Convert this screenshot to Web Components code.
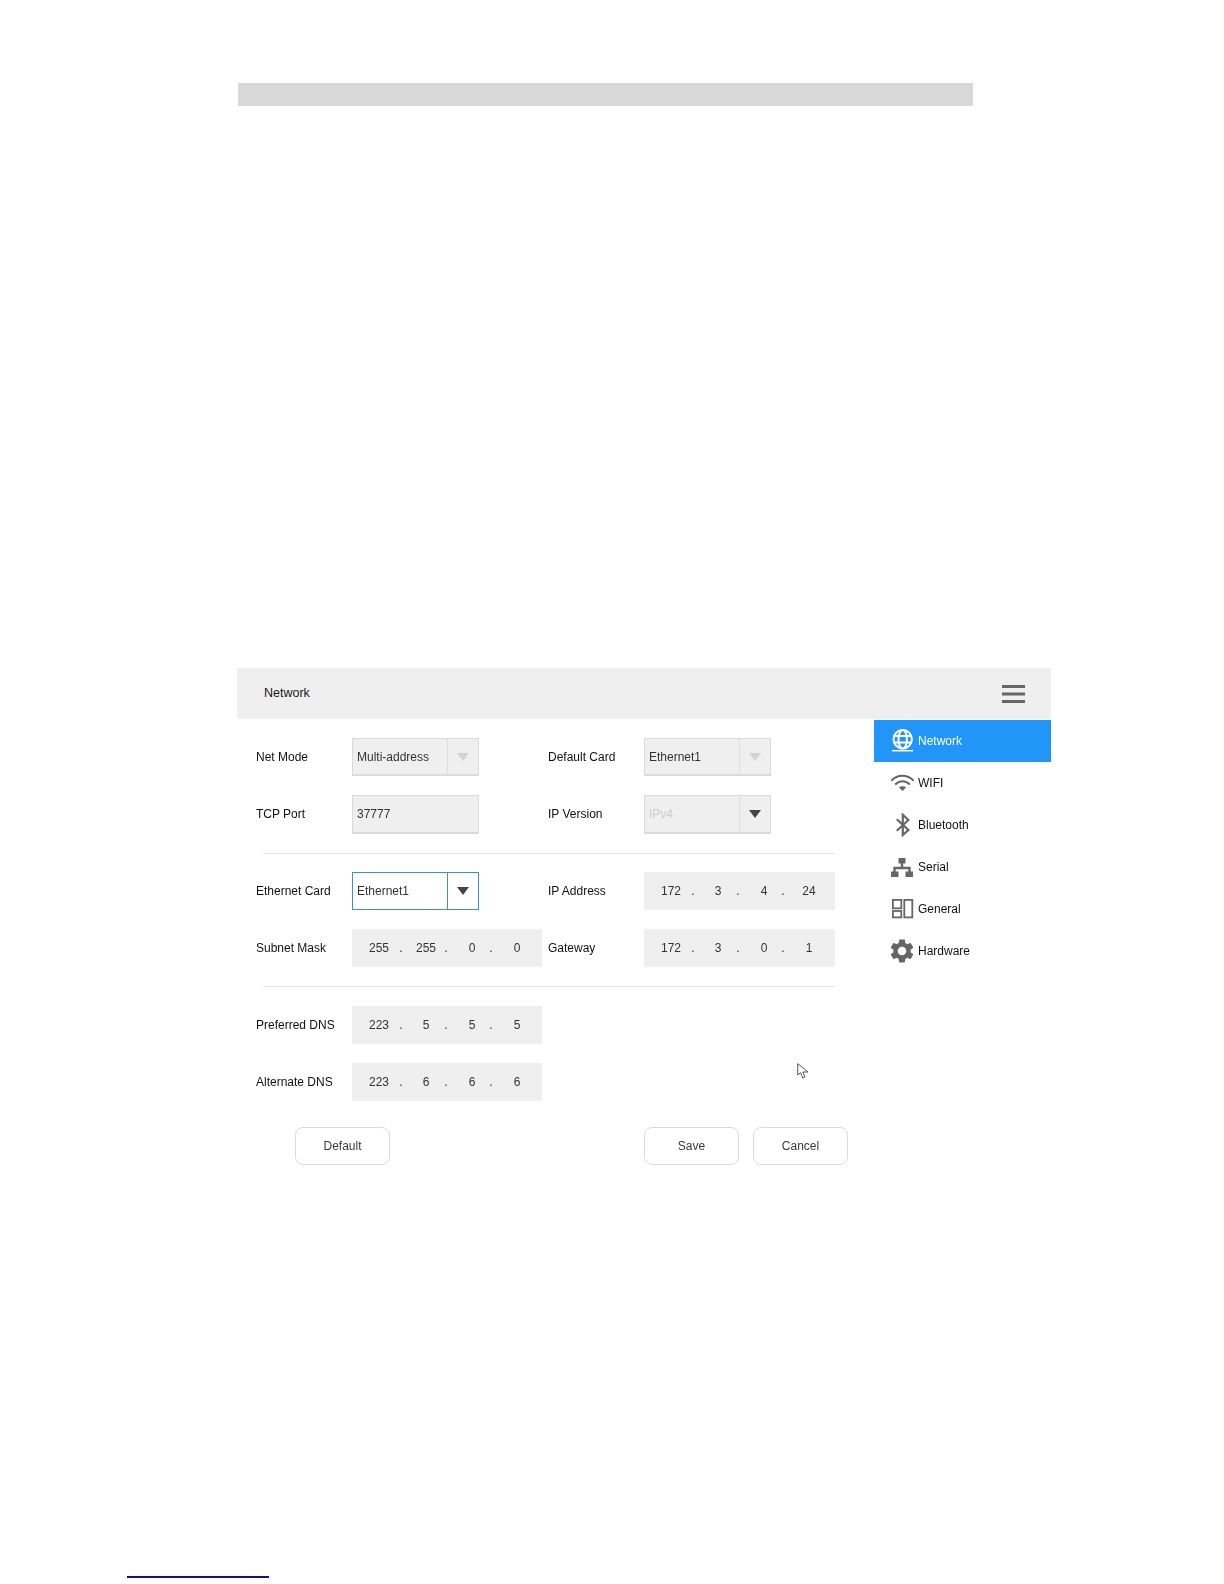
<!DOCTYPE html>
<html lang="en"><head><meta charset="utf-8"><title>Network</title>
<style>
html,body{margin:0;padding:0;background:#fff}
body{font-family:"Liberation Sans",Arial,sans-serif;font-size:12px;color:#1a1a1a}
</style></head>
<body>
<doc-page>
  <top-bar></top-bar>
  <net-panel>
    <panel-header slot="header">Network</panel-header>
    <net-form slot="form">
      <field-grid>
        <field-label>Net Mode</field-label><select-box arrow="muted">Multi-address</select-box>
        <field-label>Default Card</field-label><select-box arrow="muted">Ethernet1</select-box>
        <field-label>TCP Port</field-label><select-box arrow="none" tall>37777</select-box>
        <field-label>IP Version</field-label><select-box arrow="dark" faded tall>IPv4</select-box>
      </field-grid>
      <form-divider></form-divider>
      <field-grid>
        <field-label>Ethernet Card</field-label><select-box arrow="dark" active>Ethernet1</select-box>
        <field-label>IP Address</field-label><ip-field wide value="172.3.4.24"></ip-field>
        <field-label>Subnet Mask</field-label><ip-field value="255.255.0.0"></ip-field>
        <field-label>Gateway</field-label><ip-field wide value="172.3.0.1"></ip-field>
      </field-grid>
      <form-divider></form-divider>
      <field-grid single>
        <field-label>Preferred DNS</field-label><ip-field value="223.5.5.5"></ip-field>
        <field-label>Alternate DNS</field-label><ip-field value="223.6.6.6"></ip-field>
      </field-grid>
      <form-actions>
        <action-button slot="start">Default</action-button>
        <action-button>Save</action-button>
        <action-button>Cancel</action-button>
      </form-actions>
    </net-form>
    <side-nav slot="nav">
      <nav-item active>
        <svg slot="icon" viewBox="0 0 24 24" width="24" height="24" fill="none" stroke="currentColor" stroke-width="2"><circle cx="12.7" cy="10.300" r="9.200"/><ellipse cx="12.7" cy="10.300" rx="4.200" ry="9.200"/><path d="M3.500 7H22M3.500 13.600H22"/><path d="M2 21.700H23" stroke-width="1.500"/></svg>
        Network
      </nav-item>
      <nav-item>
        <svg slot="icon" viewBox="0 0 24 24" width="24" height="24" fill="none" stroke="currentColor" stroke-width="2"><path d="M1.300 9.800C7.500 3.200 17.500 3.200 23.700 9.800"/><path d="M5.200 13.500C9.500 9.200 15.500 9.200 19.800 13.500"/><path d="M8.800 16.300C11 14.800 14 14.800 16.200 16.300L12.500 20Z" fill="currentColor" stroke="none"/></svg>
        WIFI
      </nav-item>
      <nav-item>
        <svg slot="icon" viewBox="0 0 24 24" width="24" height="24" fill="none" stroke="currentColor" stroke-width="2.200"><path d="M6.800 6.200L18.400 17L12.800 22V1.800L18.400 7L6.800 17.800"/></svg>
        Bluetooth
      </nav-item>
      <nav-item>
        <svg slot="icon" viewBox="0 0 24 24" width="24" height="24" fill="currentColor"><path d="M8.500 3h7v5.500h-7zM1 16.500h7.500V22H1zM15.500 16.500H23V22h-7.500zM10.800 8h2.400v3.800h7.500v5.200h-2.400v-2.800H5.700V17H3.300v-5.200h7.500z"/></svg>
        Serial
      </nav-item>
      <nav-item>
        <svg slot="icon" viewBox="0 0 24 24" width="24" height="24" fill="none" stroke="currentColor" stroke-width="1.800"><rect x="2.900" y="2.900" width="8.400" height="8.400"/><rect x="2.900" y="14" width="8.400" height="6.400"/><rect x="14.300" y="2.900" width="8" height="17.500"/></svg>
        General
      </nav-item>
      <nav-item>
        <svg slot="icon" viewBox="2 2 20 20" width="24" height="24" fill="currentColor"><path d="M19.14 12.94c.04-.3.06-.61.06-.94 0-.32-.02-.64-.07-.94l2.030-1.580c.18-.14.23-.41.12-.61l-1.920-3.320c-.12-.22-.37-.29-.59-.22l-2.390.96c-.5-.38-1.030-.7-1.620-.94l-.36-2.540c-.04-.24-.24-.41-.48-.41h-3.840c-.24 0-.43.17-.47.41l-.36 2.540c-.59.24-1.130.57-1.620.94l-2.390-.96c-.22-.08-.47 0-.59.22L2.740 8.870c-.12.21-.08.47.12.61l2.030 1.580c-.05.3-.09.63-.09.94s.02.64.07.94l-2.030 1.580c-.18.14-.23.41-.12.61l1.920 3.320c.12.22.37.29.59.22l2.390-.96c.5.38 1.030.7 1.620.94l.36 2.540c.05.24.24.41.48.41h3.840c.24 0 .44-.17.47-.41l.36-2.540c.59-.24 1.130-.56 1.620-.94l2.390.96c.22.08.47 0 .59-.22l1.920-3.320c.12-.22.07-.47-.12-.61l-2.010-1.580zM12 15.600c-1.980 0-3.600-1.620-3.600-3.600s1.620-3.600 3.600-3.600 3.600 1.620 3.600 3.600-1.620 3.600-3.600 3.600z"/></svg>
        Hardware
      </nav-item>
    </side-nav>
    <mouse-cursor></mouse-cursor>
  </net-panel>
  <foot-rule></foot-rule>
</doc-page>
<script>
function def(name, css, html, extra){
  class C extends HTMLElement{
    constructor(){super();this.attachShadow({mode:'open'}).innerHTML='<style>'+css+'</style>'+html;}
    connectedCallback(){ if(extra) extra.call(this); }
  }
  customElements.define(name,C);
}
def('doc-page',':host{display:block;padding-top:83px;height:1501px;overflow:hidden}','<slot></slot>');
def('top-bar',':host{display:block;margin-left:238px;width:735px;height:23px;background:#d8d8d8;margin-bottom:562px}','');
def('net-panel',`:host{display:block;position:relative;margin-left:237px;width:814px;filter:blur(.3px)}
 .body{display:flex}`,'<slot name="header"></slot><div class="body"><slot name="form"></slot><slot name="nav"></slot></div><slot></slot>');
def('panel-header',`:host{display:flex;align-items:center;justify-content:space-between;height:51px;background:#efefef;padding:0 26px 0 27px;box-sizing:border-box;font-size:12.500px;color:#1a1a1a}
 span{padding-bottom:2px}
 svg{display:block}`,
 '<span><slot></slot></span><svg width="23" height="18" viewBox="0 0 23 18" fill="#666"><rect width="23" height="3"/><rect y="7.500" width="23" height="3"/><rect y="15" width="23" height="3"/></svg>');
def('net-form',':host{display:block;width:637px;box-sizing:border-box;padding:19px 26px 0 19px}','<slot></slot>');
def('field-grid',`:host{display:grid;grid-template-columns:96px 196px 96px 191px;row-gap:19px;align-items:center}
 :host([single]){grid-template-columns:96px 196px}`,'<slot></slot>');
def('field-label',':host{display:block;font-size:12px;color:#111;white-space:nowrap}','<slot></slot>');
def('select-box',`:host{display:flex;box-sizing:border-box;width:127px;height:38px;background:#efefef;border:1px solid #dadada;border-bottom-width:2px;font-size:12px;color:#333}
 :host([tall]){height:39px;margin-bottom:-1px}
 :host([active]){background:#fff;border:1px solid #3a8fd6;height:38px}
 :host([faded]){color:#cdcdcd}
 .t{flex:1;display:flex;align-items:center;padding-left:4px}
 .a{width:31px;flex:none;display:flex;align-items:center;justify-content:center;border-left:1px solid #dedede;box-sizing:border-box}
 :host([active]) .a{border-left-color:#3a8fd6}
 :host([arrow=none]) .a{display:none}
 i{display:block;width:0;height:0;border-left:6px solid transparent;border-right:6px solid transparent;border-top:8px solid #444}
 :host([arrow=muted]) i{border-top-color:#d2d2d2}`,
 '<div class="t"><slot></slot></div><div class="a"><i></i></div>');
def('ip-field',`:host{display:flex;box-sizing:border-box;width:190px;height:38px;background:#efefef;padding-left:15px;align-items:center;font-size:12px;color:#333}
 :host([wide]){width:191px}
 b{font-weight:400;width:24px;text-align:center;flex:none}
 u{text-decoration:none;width:4px;text-align:center;flex:none}
 u.d0{margin:0 11px 0 8px} u.d1{margin:0 12px 0 6px} u.d2{margin:0 12px 0 5px}`,'',
 function(){
  if(this.shadowRoot.querySelector('b'))return;
  const p=this.getAttribute('value').split('.');
  let h='';p.forEach((v,i)=>{h+='<b>'+v+'</b>'+(i<3?'<u class="d'+i+'">.</u>':'');});
  this.shadowRoot.innerHTML+=h;
 });
def('form-divider',`:host{display:block;height:1px;background:#e4e4e4;margin:20px 13px 18px 7px}
 :host(:last-of-type){margin-top:19px;margin-bottom:19px}`,'');
def('form-actions',':host{display:flex;gap:14px;margin:26px 0 0 39px}  slot[name=start]{display:block;margin-right:auto}','<slot name="start"></slot><slot></slot>');
def('action-button',`:host{display:flex;align-items:center;justify-content:center;box-sizing:border-box;width:95px;height:38px;border:1px solid #dadada;border-radius:8px;background:#fff;font-size:12px;color:#3a3a3a}`,'<slot></slot>');
def('side-nav',':host{display:block;width:177px;padding-top:1px}','<slot></slot>');
def('nav-item',`:host{display:flex;align-items:center;height:42px;padding-left:16px;gap:4px;font-size:12px;color:#111;box-sizing:border-box}
 :host([active]){background:#2196f8;color:#fff}
 ::slotted(svg){display:block;color:#666;flex:none}
 :host([active]) ::slotted(svg){color:#fff}`,'<slot name="icon"></slot><slot></slot>');
def('mouse-cursor',`:host{position:absolute;left:560px;top:395px;width:12px;height:16px}
 svg{display:block}`,'<svg width="12" height="16" viewBox="0 0 12 16"><path d="M.7.7V12L3.500 9.600 5.700 15 8 14 5.800 9H11Z" fill="#fff" stroke="#555" stroke-width="1"/></svg>');
def('foot-rule',':host{display:block;margin:411px 0 0 127px;width:142px;height:1.500px;background:#10108a}','');
</script>
</body></html>
